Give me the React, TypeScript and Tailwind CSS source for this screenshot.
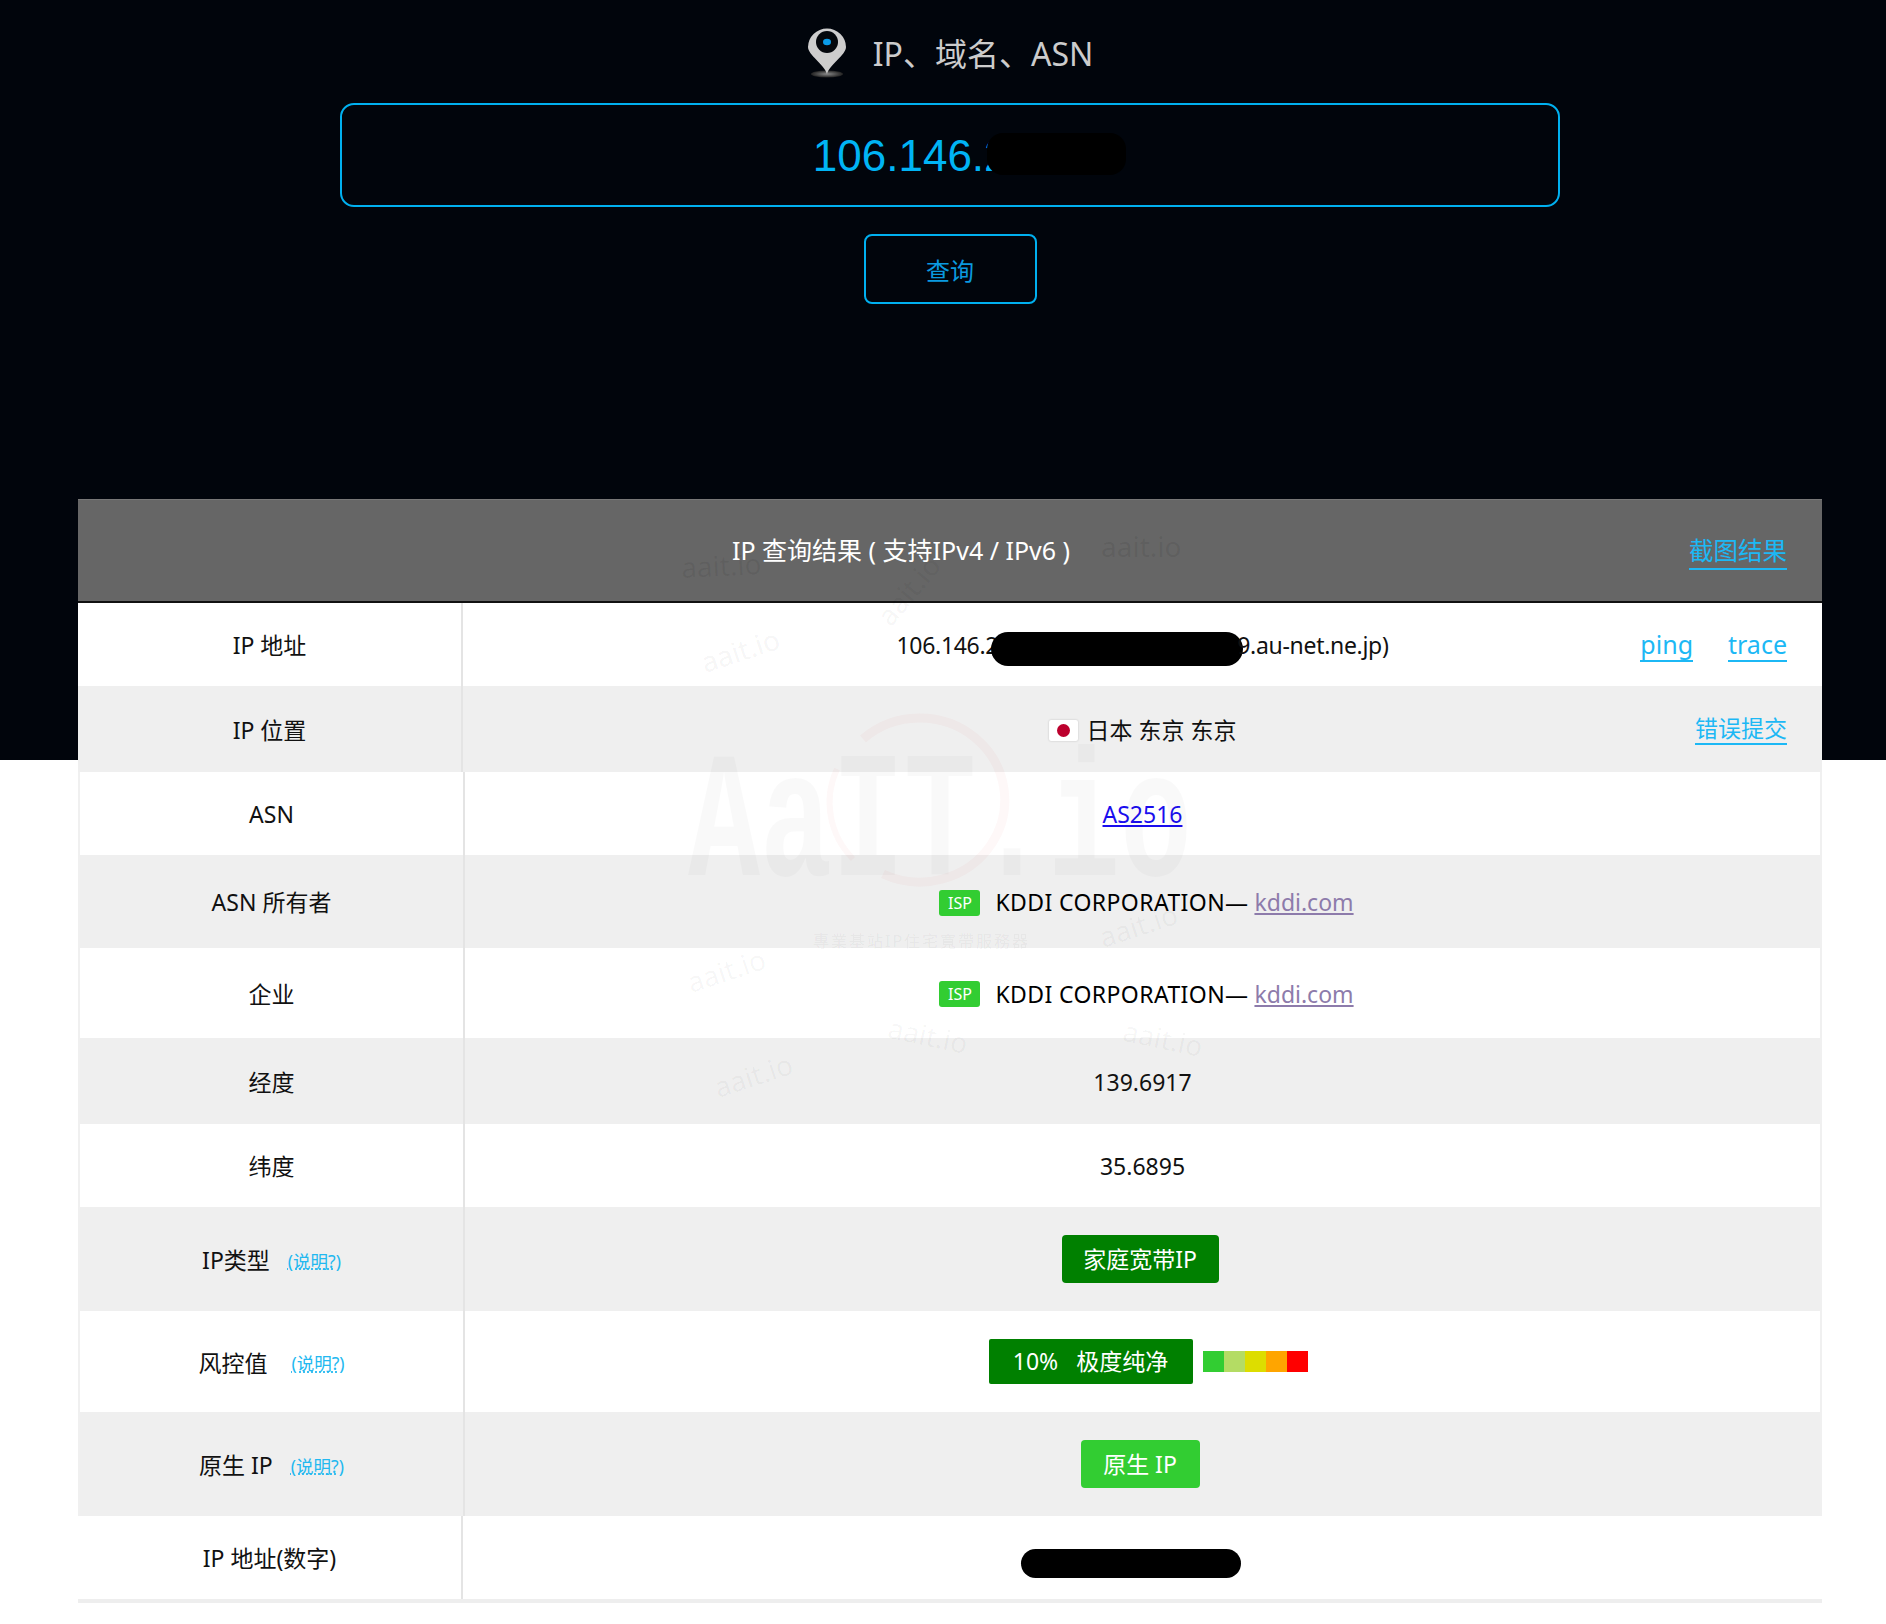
import React from 'react';

const font = { fontFamily: '"Noto Sans", "Noto Sans CJK SC", sans-serif' };

const PinIcon = () => (
  <svg width="40" height="50" viewBox="0 0 40 50">
    <defs>
      <radialGradient id="pinShadow">
        <stop offset="0" stopColor="#888" />
        <stop offset="1" stopColor="#222" />
      </radialGradient>
    </defs>
    <ellipse cx="20" cy="46" rx="16" ry="3.5" fill="url(#pinShadow)" />
    <path d="M20 46 C17 36 1 27 1 19 A19 18.5 0 0 1 39 19 C39 27 23 36 20 46 Z" fill="#cdcdcd" />
    <circle cx="20" cy="14" r="11" fill="#04070c" />
    <ellipse cx="20" cy="14" rx="4" ry="3.2" fill="#0a9be8" />
  </svg>
);

const Explain = () => (
  <a className="mt-[2px] text-[17.5px] text-[#22b8f0] underline decoration-dotted">(说明?)</a>
);

const IspLine = () => (
  <span className="ml-[8px] flex items-center">
    <span className="flex h-[26px] w-[41px] items-center justify-center rounded-[3px] bg-[#32cd32] text-[16px] text-white">ISP</span>
    <span className="ml-[15px] tracking-[0.4px] text-black">KDDI CORPORATION—</span>
    <a className="ml-[6px] text-[#8d7bab] underline">kddi.com</a>
  </span>
);

const rows = [
  {
    h: 'h-[83px]',
    label: <span>IP 地址</span>,
    value: (
      <span className="flex items-center tracking-[-0.3px]">
        <span>106.146.2</span>
        <span className="-ml-[7px] mt-[7px] h-[34px] w-[252px] rounded-full bg-black" />
        <span className="-ml-[6px]">9.au-net.ne.jp)</span>
      </span>
    ),
    right: (
      <>
        <a className="border-b-2 border-[#1cb8f5] text-[25px] leading-[32px] text-[#1cb8f5]">ping</a>
        <a className="ml-[35px] border-b-2 border-[#1cb8f5] text-[25px] leading-[32px] text-[#1cb8f5]">trace</a>
      </>
    ),
  },
  {
    h: 'h-[86px]',
    label: <span>IP 位置</span>,
    value: (
      <span className="flex items-center">
        <span className="flex h-[21px] w-[29px] items-center justify-center rounded-[2px] bg-white shadow-[0_0_2px_#bbb]">
          <span className="h-[13px] w-[13px] rounded-full bg-[#bc002d]" />
        </span>
        <span className="ml-[9px]">日本 东京 东京</span>
      </span>
    ),
    right: <a className="border-b-2 border-[#1cb8f5] text-[23px] leading-[30px] text-[#1cb8f5]">错误提交</a>,
  },
  {
    h: 'h-[83px]',
    edge: true,
    label: <span>ASN</span>,
    value: <a className="text-[#1a0dee] underline">AS2516</a>,
  },
  {
    h: 'h-[93px]',
    edge: true,
    label: <span>ASN 所有者</span>,
    value: <IspLine />,
  },
  {
    h: 'h-[90px]',
    edge: true,
    label: <span>企业</span>,
    value: <IspLine />,
  },
  {
    h: 'h-[86px]',
    edge: true,
    label: <span>经度</span>,
    value: <span>139.6917</span>,
  },
  {
    h: 'h-[83px]',
    edge: true,
    label: <span>纬度</span>,
    value: <span>35.6895</span>,
  },
  {
    h: 'h-[104px]',
    edge: true,
    label: (
      <span className="flex items-center gap-[18px]">
        <span>IP类型</span>
        <Explain />
      </span>
    ),
    value: (
      <span className="mr-[5px] -mt-[2px] flex h-[48px] w-[157px] items-center justify-center rounded-[4px] bg-[#008000] text-white">家庭宽带IP</span>
    ),
  },
  {
    h: 'h-[101px]',
    edge: true,
    label: (
      <span className="flex items-center gap-[24px]">
        <span className="mt-[2px]">风控值</span>
        <Explain />
      </span>
    ),
    value: (
      <span className="ml-[11px] -mt-[2px] flex items-center">
        <span className="flex h-[45px] w-[204px] items-center justify-center rounded-[2px] bg-[#008000] text-white">10%&nbsp;&nbsp;&nbsp;极度纯净</span>
        <span className="ml-[10px] flex h-[21px]">
          <span className="w-[21px] bg-[#32cd32]" />
          <span className="w-[21px] bg-[#b4dc64]" />
          <span className="w-[21px] bg-[#dddd00]" />
          <span className="w-[21px] bg-[#ffa500]" />
          <span className="w-[21px] bg-[#ff0000]" />
        </span>
      </span>
    ),
  },
  {
    h: 'h-[104px]',
    edge: true,
    label: (
      <span className="flex items-center gap-[18px]">
        <span>原生 IP</span>
        <Explain />
      </span>
    ),
    value: (
      <span className="mr-[5px] -mt-[2px] flex h-[48px] w-[119px] items-center justify-center rounded-[4px] bg-[#32cd32] text-white">原生 IP</span>
    ),
  },
  {
    h: 'h-[83px]',
    label: <span>IP 地址(数字)</span>,
    value: <span className="mr-[24px] mt-[9px] h-[29px] w-[220px] rounded-full bg-black" />,
  },
];

const App: React.FC = () => {
  return (
    <div className="min-h-[1624px] bg-white" style={font}>
      {/* Hero */}
      <div className="h-[760px] bg-[#01050c] pl-[14px] pt-[28px]">
        <div className="flex h-[50px] items-center justify-center">
          <PinIcon />
          <span className="ml-[26px] mt-[2px] text-[32px] text-[#cccccc]">IP、域名、ASN</span>
        </div>
        <div className="mx-auto mt-[25px] flex h-[104px] w-[1220px] items-center justify-center rounded-[14px] border-2 border-[#00b0f0] pt-[1px]">
          <span className="relative ml-[7px] font-['Liberation_Sans'] text-[44px] text-[#00b4f5]">
            106.146.2<span className="invisible">0.00</span>
            <span className="absolute left-[174px] top-[10px] h-[42px] w-[139px] rounded-[16px] bg-black" />
          </span>
        </div>
        <button className="mx-auto mt-[27px] flex h-[70px] w-[173px] items-center justify-center rounded-[8px] border-2 border-[#00b0f0] pt-[3px] text-[24px] text-[#0a9ae0]">
          查询
        </button>
      </div>

      {/* Result table */}
      <div className="relative -mt-[261px] ml-[78px] mr-[64px]">
        <div className="flex h-[104px] items-center border-t border-b-2 border-[#777] border-b-[#111] bg-[#666666] pl-[654px] pr-[35px] text-[25px] text-white">
          <span>IP 查询结果 ( 支持IPv4 / IPv6 )</span>
          <a className="ml-auto mt-[2px] border-b-2 border-[#1cb8f5] text-[24.5px] leading-[34px] text-[#1cb8f5]">截图结果</a>
        </div>

        {rows.map((row, i) => (
          <div
            key={i}
            className={`flex pt-[2px] text-[23px] text-[#111] ${row.h} ${i % 2 === 1 ? 'bg-[#efefef]' : 'bg-white'} ${row.edge ? 'border-x-2 border-[#f0f0f0]' : ''}`}
          >
            <div className="-mt-[2px] flex w-[385px] shrink-0 items-center justify-center border-r-2 border-[#e4e4e4] pt-[2px]">
              {row.label}
            </div>
            <div className="grid flex-1 grid-cols-[1fr_auto_1fr] items-center">
              <span />
              <div className="flex items-center justify-center">{row.value}</div>
              <div className="-mt-[2px] flex items-center justify-end pr-[35px]">{row.right}</div>
            </div>
          </div>
        ))}
        <div className="h-[4px] bg-[#eeeeee]" />

        {/* Watermark over the table */}
        <div className="pointer-events-none absolute inset-0 overflow-hidden">
          <span className="absolute left-[610px] top-[258px] origin-center scale-y-150 font-['Liberation_Mono'] text-[120px] font-bold leading-[140px] text-black/[0.025]">AaIT.io</span>
          <svg className="absolute left-[745px] top-[210px]" width="190" height="180" viewBox="0 0 190 180">
            <path d="M40 30 A85 82 0 1 1 60 165" fill="none" stroke="#d02020" strokeOpacity="0.03" strokeWidth="9" />
            <path d="M14 60 A85 82 0 0 0 30 150" fill="none" stroke="#d02020" strokeOpacity="0.03" strokeWidth="6" />
          </svg>
          <span className="absolute left-[735px] top-[430px] text-[16px] tracking-[2px] text-black/[0.05]">專業基站IP住宅寬帶服務器</span>
          <span className="absolute left-[603px] top-[45px] -rotate-[3deg] text-[28px] text-black/[0.06]">aait.io</span>
          <span className="absolute left-[1023px] top-[26px] text-[28px] text-black/[0.07]">aait.io</span>
          <span className="absolute left-[622px] top-[130px] -rotate-[18deg] text-[28px] text-black/[0.05]">aait.io</span>
          <span className="absolute left-[790px] top-[70px] -rotate-[50deg] text-[28px] text-black/[0.05]">aait.io</span>
          <span className="absolute left-[608px] top-[450px] -rotate-[18deg] text-[28px] text-black/[0.04]">aait.io</span>
          <span className="absolute left-[1020px] top-[405px] -rotate-[18deg] text-[28px] text-black/[0.04]">aait.io</span>
          <span className="absolute left-[810px] top-[515px] rotate-[12deg] text-[28px] text-black/[0.04]">aait.io</span>
          <span className="absolute left-[1045px] top-[518px] rotate-[12deg] text-[28px] text-black/[0.04]">aait.io</span>
          <span className="absolute left-[635px] top-[555px] -rotate-[18deg] text-[28px] text-black/[0.04]">aait.io</span>
        </div>
      </div>
    </div>
  );
};

export default App;
